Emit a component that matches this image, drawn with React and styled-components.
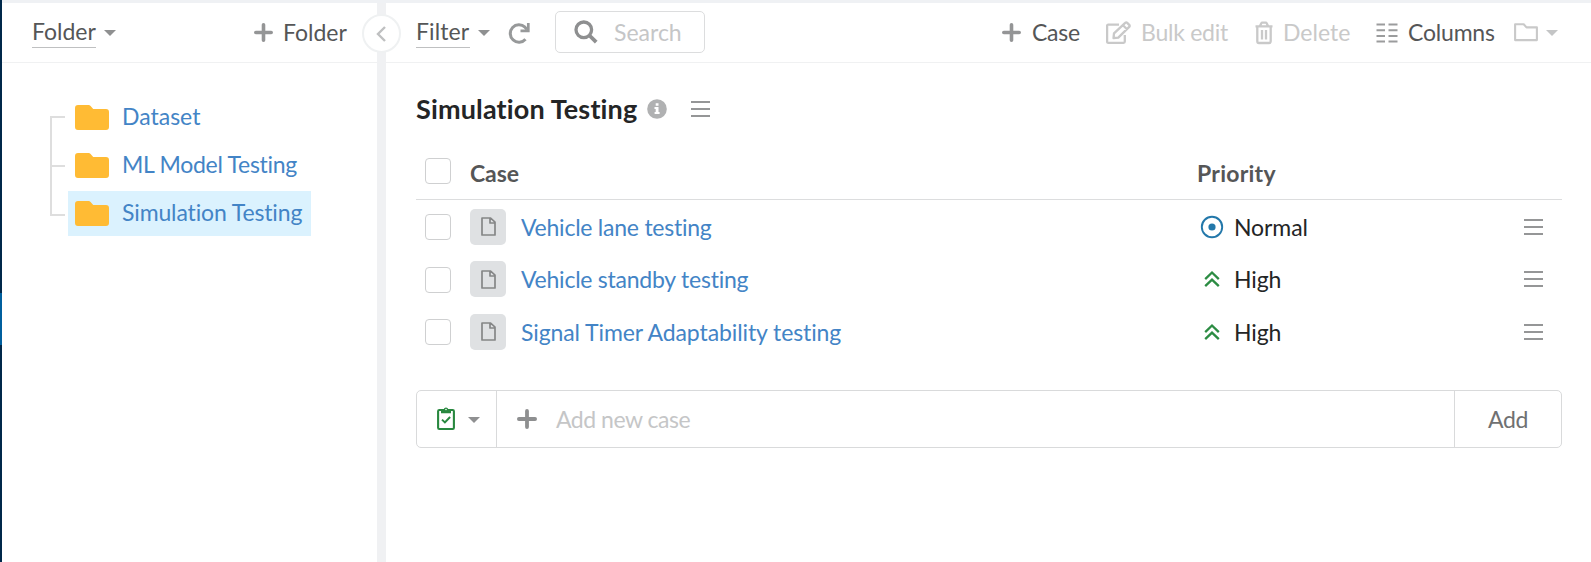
import React from "react";
import styled, { createGlobalStyle } from "styled-components";

const GlobalStyle = createGlobalStyle`
  * { box-sizing: border-box; }
  body { margin: 0; background: #fff; font-family: Lato, "Liberation Sans", sans-serif; font-size: 23px; color: #242526; }
  button { font: inherit; }
  svg { display: block; flex: none; }
`;

const Page = styled.div`
  display: flex;
  width: 1591px;
  height: 562px;
  overflow: hidden;
`;
const Rail = styled.div`
  width: 2px;
  padding-top: 293px;
  background: #00284a;
`;
const RailActive = styled.div`
  height: 52px;
  background: #005f9e;
`;
const Workspace = styled.div`
  flex: 1;
  display: flex;
  border-top: 3px solid #eff1f4;
`;
const Sidebar = styled.aside`
  width: 375px;
`;
const Divider = styled.div`
  position: relative;
  width: 9px;
  background: #f0f1f3;
`;
const CollapseButton = styled.button`
  position: absolute;
  left: -15px;
  top: 11px;
  width: 39px;
  height: 39px;
  padding: 0 1px 0 0;
  display: grid;
  place-items: center;
  border: 2px solid #eff1f2;
  border-radius: 50%;
  background: #fff;
`;
const Main = styled.main`
  flex: 1;
`;
const Bar = styled.header`
  display: flex;
  align-items: flex-start;
  height: 60px;
  padding-left: 30px;
  border-bottom: 1px solid #f0f1f2;
`;
const Tool = styled.div`
  display: flex;
  align-items: center;
  height: 59px;
  margin-left: ${(p) => p.$gap || 0}px;
  color: ${(p) => (p.$muted ? "#c9c9c9" : "#555657")};
`;
const Label = styled.span`
  width: ${(p) => (p.$w ? `${p.$w}px` : "auto")};
  margin-left: ${(p) => p.$gap || 0}px;
  white-space: nowrap;
  line-height: 28px;
  letter-spacing: ${(p) => p.$track || 0}px;
`;
const ToolLabel = styled(Label)`
  margin-top: -2px;
`;
const DropLabel = styled(Label)`
  height: 33px;
  margin-top: -2px;
  line-height: 32px;
  border-bottom: 1px solid #bfc0c1;
`;
const Caret = styled.i`
  border: 6px solid transparent;
  border-top: 6px solid ${(p) => p.$color || "#8f9091"};
  border-bottom: 0;
  margin: ${(p) => p.$drop || 0}px 0 0 ${(p) => p.$gap}px;
`;
const SearchBox = styled.div`
  display: flex;
  align-items: center;
  width: 150px;
  height: 42px;
  margin: 8px 0 0 25px;
  padding-left: 18px;
  border: 1px solid #dcddde;
  border-radius: 5px;
  color: #c5c6c7;
`;
const Tree = styled.ul`
  list-style: none;
  margin: 31px 0 0 48px;
  padding: 0;
`;
const Branch = styled.li`
  display: flex;
  align-items: center;
  height: 48px;
`;
const Elbow = styled.i`
  width: 15px;
  height: 48px;
  display: flex;
  flex-direction: column;
  justify-content: ${(p) => (p.$last ? "flex-start" : "flex-end")};
  &::before {
    content: "";
    height: ${(p) => (p.$first ? 24 : p.$last ? 24 : 48)}px;
    border-left: 2px solid #dedede;
    border-top: ${(p) => (p.$first ? "2px solid #dedede" : "0")};
    border-bottom: ${(p) => (p.$last ? "2px solid #dedede" : "0")};
    background: ${(p) =>
      p.$first || p.$last
        ? "none"
        : "linear-gradient(#dedede, #dedede) 0 23px / 100% 2px no-repeat"};
  }
`;
const FolderLink = styled.a`
  display: flex;
  align-items: center;
  height: 45px;
  margin: 0 0 1px 3px;
  width: 243px;
  padding: 0 0 2px 7px;
  background: ${(p) => (p.$active ? "#dbf2fe" : "transparent")};
  color: #4384c6;
  svg { margin-top: 1px; }
`;
const Content = styled.section`
  padding: 28px 29px 0 30px;
`;
const TitleRow = styled.div`
  display: flex;
  align-items: center;
  height: 36px;
  margin-bottom: 14px;
`;
const Title = styled.h1`
  width: 231px;
  margin: 0;
  font-size: 27px;
  font-weight: 700;
  line-height: 34px;
  letter-spacing: 0.15px;
  white-space: nowrap;
`;
const TitleMenu = styled.span`
  margin-left: 24px;
`;
const Row = styled.div`
  display: grid;
  grid-template-columns: 54px 727px 1fr 38px;
  align-items: center;
  height: ${(p) => p.$h}px;
`;
const HeadRow = styled(Row)`
  height: 59px;
  padding-top: 5px;
  border-bottom: 1px solid #dcddde;
  font-weight: 700;
  color: #555657;
`;
const Check = styled.span`
  width: 26px;
  height: 26px;
  margin: ${(p) => (p.$head ? "-3px" : "1px")} 0 0 9px;
  border: 1px solid #cfd0d1;
  border-radius: 4px;
`;
const Cell = styled.div`
  display: flex;
  align-items: center;
  padding-left: ${(p) => p.$inset || 0}px;
  color: ${(p) => p.$color || "inherit"};
`;
const FileTile = styled.span`
  display: grid;
  place-items: center;
  width: 36px;
  height: 36px;
  border-radius: 5px;
  background: #dfe1e3;
`;
const AddForm = styled.div`
  display: flex;
  height: 58px;
  margin-top: 32px;
  border: 1px solid #d9dadb;
  border-radius: 5px;
`;
const TypePicker = styled.div`
  display: flex;
  align-items: center;
  width: 80px;
  padding-left: 20px;
  border-right: 1px solid #d9dadb;
`;
const NewCase = styled.div`
  flex: 1;
  display: flex;
  align-items: center;
  padding-left: 20px;
  color: #c5c6c7;
`;
const AddButton = styled.div`
  display: flex;
  align-items: center;
  width: 107px;
  padding-left: 33px;
  border-left: 1px solid #d9dadb;
  color: #707172;
`;

const Plus = ({ s = 19, c = "#949596" }) => (
  <svg width={s} height={s} viewBox="0 0 19 19">
    <path d="M9.5 1.8v15.4M1.8 9.5h15.4" stroke={c} strokeWidth="3.6" strokeLinecap="round" />
  </svg>
);
const Lines = () => (
  <svg width="19" height="16" viewBox="0 0 19 16">
    <path d="M0 1h19M0 8h19M0 15h19" stroke="#959697" strokeWidth="2" />
  </svg>
);
const Refresh = () => (
  <svg width="22" height="22" viewBox="0 0 22 22" fill="none" stroke="#97999a" strokeWidth="3">
    <path d="M17.5 17.2A8.7 8.7 0 1 1 17 5.2L19 7.4" />
    <path d="M20.3 1v7.8h-7.8" strokeWidth="2.7" />
  </svg>
);
const Magnifier = () => (
  <svg width="24" height="24" viewBox="0 0 24 24" fill="none" stroke="#8e8f90">
    <circle cx="9.8" cy="9.8" r="7.8" strokeWidth="3.3" />
    <path d="M15.5 15.5l6.7 6.7" strokeWidth="3.8" />
  </svg>
);
const Edit = () => (
  <svg width="25" height="24" viewBox="0 0 25 24" fill="none" stroke="#c9c9c9" strokeWidth="2.3" strokeLinejoin="round">
    <path d="M13 3.6H2.2Q1.1 3.6 1.1 4.8v15.8q0 1.2 1.1 1.2h15.4q1.2 0 1.2-1.2V14" />
    <path d="M8 12.4L19.2 1.9q1-1 2 0l2 2q1 1 0 2L12.3 16.6l-4.8.6zM17 4.2l4 4" />
  </svg>
);
const Trash = () => (
  <svg width="20" height="24" viewBox="0 0 20 24" fill="none" stroke="#c9c9c9" strokeWidth="2.3">
    <path d="M1.5 5.4h17M6 5l1.2-2.6q.4-.8 1.2-.8h3.2q.8 0 1.2.8L14 5M3.3 5.4v14.9q0 1.7 1.7 1.7h10q1.7 0 1.7-1.7V5.4M8 9v9.6M12 9v9.6" />
  </svg>
);
const ColumnsIcon = () => (
  <svg width="22" height="20" viewBox="0 0 22 20">
    <path d="M.5 1.5h8.5M12.5 1.5h9M.5 7.2h8.5M12.5 7.2h9M.5 12.9h8.5M12.5 12.9h9M.5 18.4h8.5M12.5 18.4h9" stroke="#9b9c9d" strokeWidth="2" />
  </svg>
);
const FolderOutline = () => (
  <svg width="24" height="19" viewBox="0 0 24 19" fill="none" stroke="#c9c9c9" strokeWidth="2.1" strokeLinejoin="round">
    <path d="M1.1 17.1V1.2h8.6l2.8 3.2h10.4v12.7z" />
  </svg>
);
const FolderSolid = () => (
  <svg width="34" height="25" viewBox="0 0 34 25">
    <path d="M3 0h10.5q1.3 0 2.1.9L18.2 4H31q3 0 3 3v15q0 3-3 3H3q-3 0-3-3V3q0-3 3-3z" fill="#ffbb34" />
  </svg>
);
const Info = () => (
  <svg width="20" height="20" viewBox="0 0 20 20">
    <circle cx="10" cy="10" r="9.8" fill="#b0b1b2" />
    <path d="M8.7 4.3h2.8v2.4H8.7zM7.5 8h4v5h1.1v1.9h-5V13h1.1v-3.1H7.5z" fill="#fff" />
  </svg>
);
const FileIcon = () => (
  <svg width="15" height="19" viewBox="0 0 15 19" fill="none" stroke="#858687" strokeWidth="1.7" strokeLinejoin="round">
    <path d="M1 1h8.6L14 5.2V18H1zM9 1v5h5" />
  </svg>
);
const Normal = () => (
  <svg width="24" height="24" viewBox="0 0 24 24">
    <circle cx="12" cy="12" r="10.2" fill="none" stroke="#2378aa" strokeWidth="1.9" />
    <circle cx="12" cy="12" r="3.6" fill="#2378aa" />
  </svg>
);
const High = () => (
  <svg width="24" height="24" viewBox="0 0 24 24" fill="none" stroke="#2c8c43" strokeWidth="2.3">
    <path d="M5.2 12.1L12 5.5l6.8 6.6M5.2 19.2L12 12.6l6.8 6.6" />
  </svg>
);
const Clipboard = () => (
  <svg width="18" height="24" viewBox="0 0 18 24" fill="none" stroke="#28883f" strokeWidth="2.1">
    <rect x="1.1" y="3" width="15.8" height="19" rx="1.2" />
    <path d="M4 2.2h2.7a2.4 2.4 0 0 1 4.6 0H14v4H4z" fill="#28883f" stroke="none" />
    <circle cx="9" cy="2.5" r=".8" fill="#fff" stroke="none" />
    <path d="M5 12.6l2.9 2.8 5.2-5.4" strokeWidth="2" />
  </svg>
);

const folders = [
  { name: "Dataset", track: 0 },
  { name: "ML Model Testing", track: -0.28 },
  { name: "Simulation Testing", track: -0.13, active: true },
];
const cases = [
  { name: "Vehicle lane testing", track: -0.24, priority: "Normal", h: 53 },
  { name: "Vehicle standby testing", track: -0.24, priority: "High", h: 52 },
  { name: "Signal Timer Adaptability testing", track: -0.1, priority: "High", h: 53 },
];

export default function App() {
  return (
    <>
      <GlobalStyle />
      <Page>
        <Rail><RailActive /></Rail>
        <Workspace>
          <Sidebar>
            <Bar>
              <Tool>
                <DropLabel $w={64}>Folder</DropLabel>
                <Caret $gap={8} />
              </Tool>
              <Tool $gap={138}>
                <Plus />
                <ToolLabel $w={64} $gap={10}>Folder</ToolLabel>
              </Tool>
            </Bar>
            <Tree>
              {folders.map((f, i) => (
                <Branch key={f.name}>
                  <Elbow $first={i === 0} $last={i === folders.length - 1} />
                  <FolderLink $active={f.active}>
                    <FolderSolid />
                    <ToolLabel $gap={13} $track={f.track}>{f.name}</ToolLabel>
                  </FolderLink>
                </Branch>
              ))}
            </Tree>
          </Sidebar>
          <Divider>
            <CollapseButton>
              <svg width="10" height="16" viewBox="0 0 10 16" fill="none" stroke="#bfc0c1" strokeWidth="2.4">
                <path d="M9 1L2 8l7 7" />
              </svg>
            </CollapseButton>
          </Divider>
          <Main>
            <Bar>
              <Tool>
                <DropLabel $w={54} $track={0.1}>Filter</DropLabel>
                <Caret $gap={8} />
              </Tool>
              <Tool $gap={18}><Refresh /></Tool>
              <SearchBox>
                <Magnifier />
                <Label $gap={16}>Search</Label>
              </SearchBox>
              <Tool $gap={297}>
                <Plus />
                <ToolLabel $w={50} $gap={11} $track={-0.25}>Case</ToolLabel>
              </Tool>
              <Tool $gap={24} $muted>
                <Edit />
                <ToolLabel $w={88} $gap={10} $track={-0.25}>Bulk edit</ToolLabel>
              </Tool>
              <Tool $gap={25} $muted>
                <Trash />
                <ToolLabel $w={67} $gap={9}>Delete</ToolLabel>
              </Tool>
              <Tool $gap={26}>
                <ColumnsIcon />
                <ToolLabel $w={88} $gap={10} $track={-0.2}>Columns</ToolLabel>
              </Tool>
              <Tool $gap={18} $muted>
                <FolderOutline />
                <Caret $gap={8} $color="#c4c5c6" />
              </Tool>
            </Bar>
            <Content>
              <TitleRow>
                <Title>Simulation Testing</Title>
                <Info />
                <TitleMenu><Lines /></TitleMenu>
              </TitleRow>
              <HeadRow>
                <Check $head />
                <Label $track={-0.1}>Case</Label>
                <Label $track={0.25}>Priority</Label>
              </HeadRow>
              {cases.map((c) => (
                <Row key={c.name} $h={c.h}>
                  <Check />
                  <Cell $color="#4384c6">
                    <FileTile><FileIcon /></FileTile>
                    <Label $gap={15} $track={c.track}>{c.name}</Label>
                  </Cell>
                  <Cell $inset={3}>
                    {c.priority === "Normal" ? <Normal /> : <High />}
                    <Label $gap={10} $track={-0.1}>{c.priority}</Label>
                  </Cell>
                  <Lines />
                </Row>
              ))}
              <AddForm>
                <TypePicker>
                  <Clipboard />
                  <Caret $gap={13} $drop={2} />
                </TypePicker>
                <NewCase>
                  <Plus s={20} c="#8e8f90" />
                  <Label $gap={19} $track={-0.48}>Add new case</Label>
                </NewCase>
                <AddButton><Label $track={-0.3}>Add</Label></AddButton>
              </AddForm>
            </Content>
          </Main>
        </Workspace>
      </Page>
    </>
  );
}
